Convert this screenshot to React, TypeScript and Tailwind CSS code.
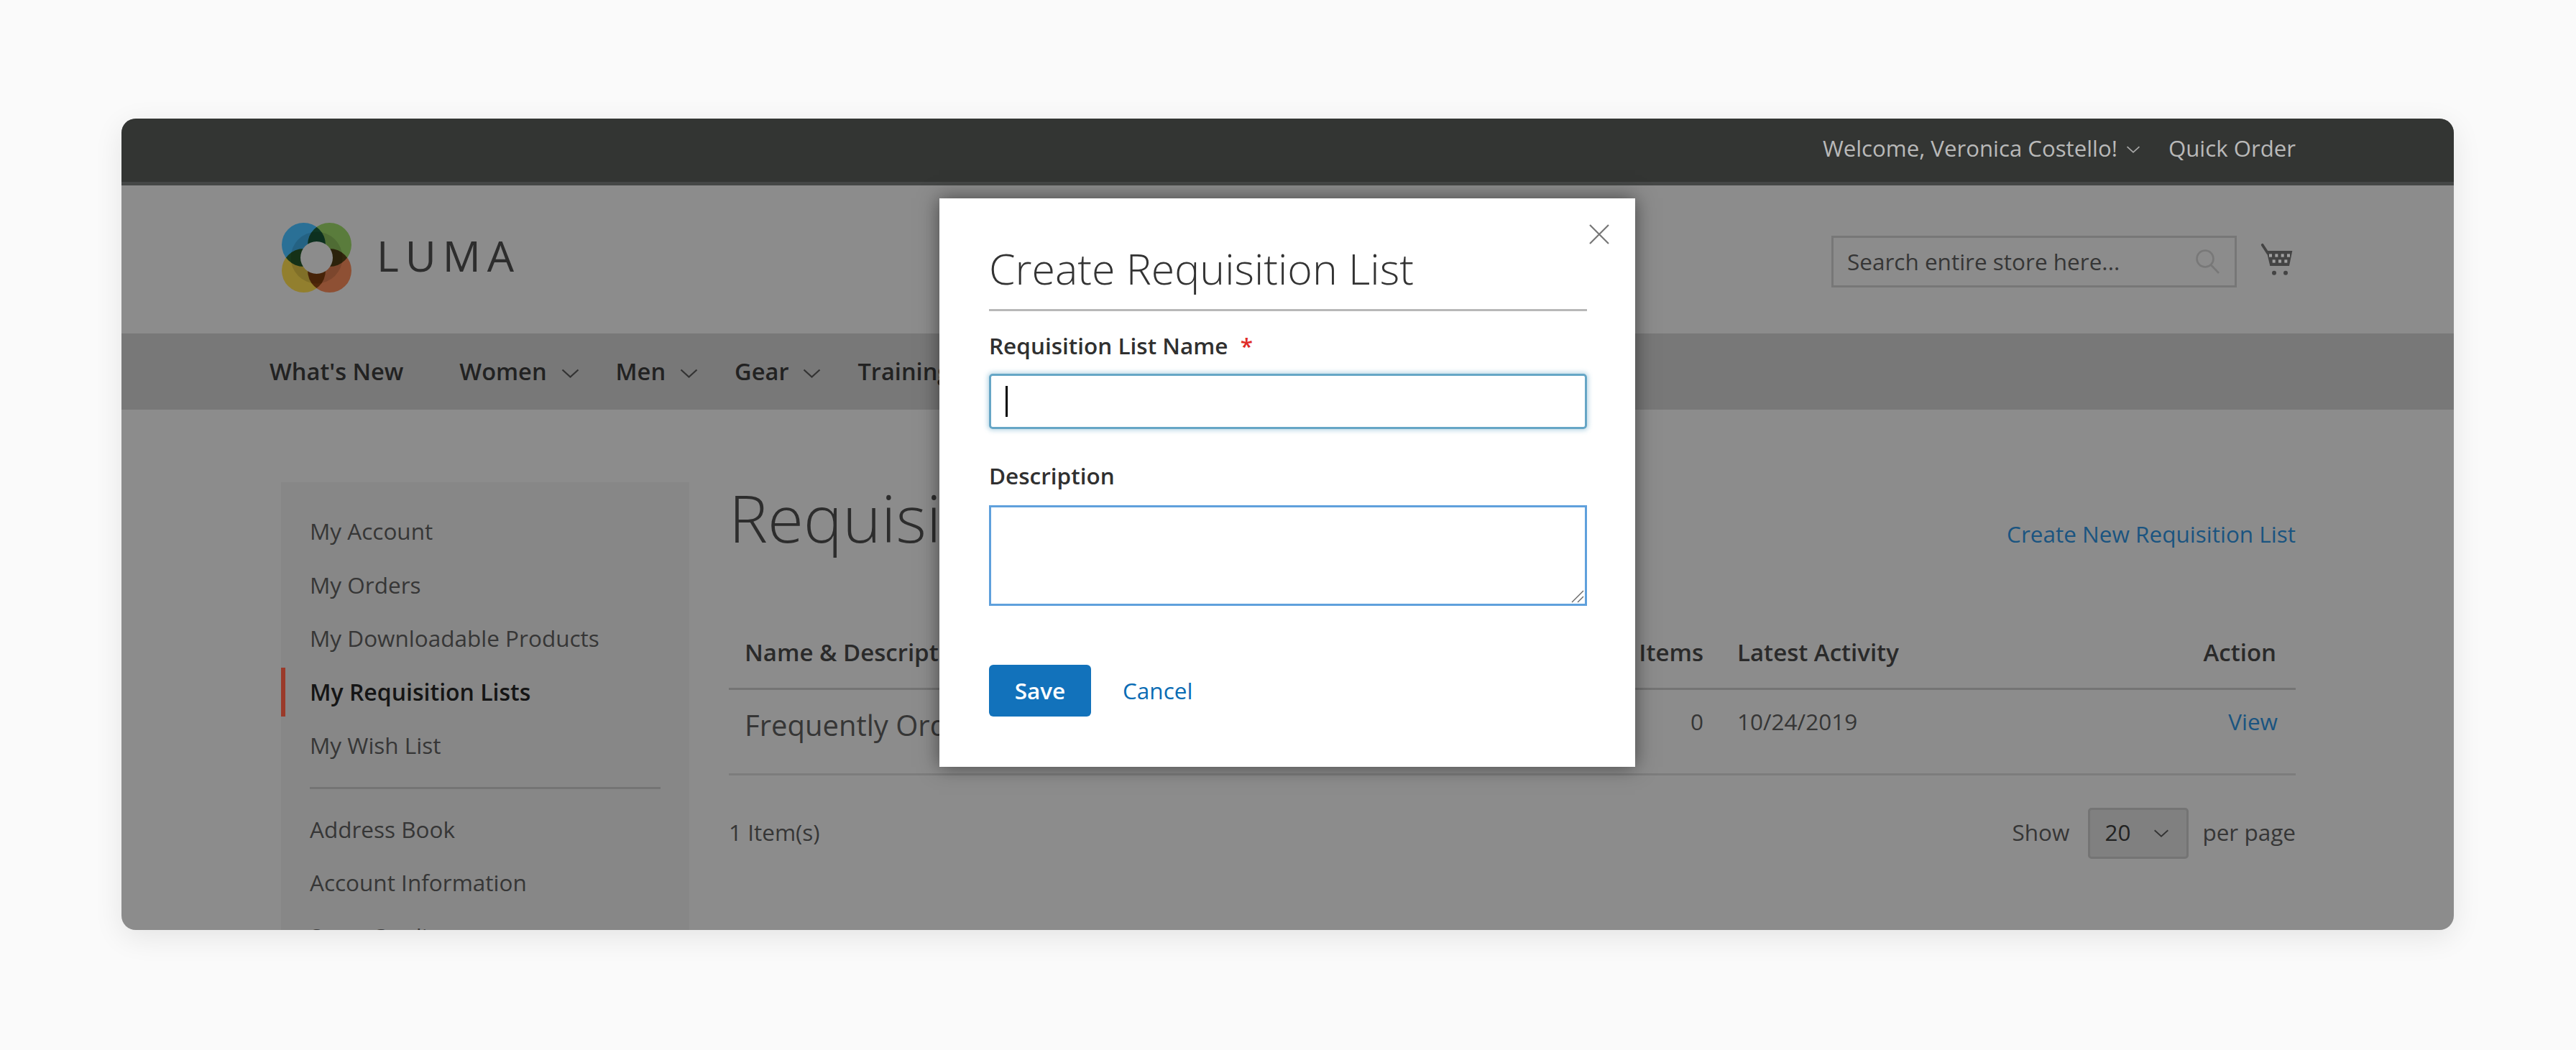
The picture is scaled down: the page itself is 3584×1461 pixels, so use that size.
import React from "react";

const Chevron = ({ className = "" }: { className?: string }) => (
  <svg viewBox="0 0 25 13" className={className} fill="none" stroke="currentColor" strokeWidth="2.2">
    <path d="M1.5 1.5 L12.5 11.5 L23.5 1.5" />
  </svg>
);

const Logo = () => (
  <svg width="98" height="99" viewBox="0 0 98 99" className="isolate">
    <circle cx="30.5" cy="31.5" r="30.5" fill="#2a7096" className="mix-blend-multiply" />
    <circle cx="66.5" cy="31.5" r="30.5" fill="#5a7c3c" className="mix-blend-multiply" />
    <circle cx="30.5" cy="67.5" r="30.5" fill="#927f2e" className="mix-blend-multiply" />
    <circle cx="66.5" cy="67.5" r="30.5" fill="#8e5034" className="mix-blend-multiply" />
    <circle cx="48.5" cy="49.5" r="36" fill="#000000" fillOpacity="0.12" />
    <circle cx="48.5" cy="49.5" r="22.5" fill="#8c8c8c" />
  </svg>
);

const Cart = () => (
  <svg width="45" height="46" viewBox="0 0 135 138">
    <path d="M8 8 L30 42" stroke="#444" strokeWidth="11" strokeLinecap="round" />
    <path d="M25 33 H133 L120 96 H40 Z" fill="#444" />
    <g fill="#a0a0a0">
      <rect x="36" y="46" width="12" height="13" />
      <rect x="61" y="46" width="12" height="13" />
      <rect x="86" y="46" width="12" height="13" />
      <rect x="111" y="46" width="12" height="13" />
      <rect x="50" y="70" width="12" height="13" />
      <rect x="75" y="70" width="12" height="13" />
      <rect x="100" y="70" width="12" height="13" />
    </g>
    <circle cx="57" cy="125" r="9" fill="#444" />
    <circle cx="105" cy="125" r="9" fill="#444" />
  </svg>
);

const Search = () => (
  <svg width="34" height="34" viewBox="0 0 34 34" fill="none" stroke="#787878" strokeWidth="2.6">
    <circle cx="13" cy="13" r="11.5" />
    <path d="M21.5 22 L32 33" />
  </svg>
);

const group1 = ["My Account", "My Orders", "My Downloadable Products"];
const group2 = ["Address Book", "Account Information", "Store Credit"];
const nav = ["Women", "Men", "Gear"];

export default function App() {
  return (
    <div className="h-[1461px] w-[3584px] overflow-hidden bg-[#fafafa] pl-[169px] pt-[165px] font-['Open_Sans',sans-serif] text-[31.5px] leading-[40px]">
      <div className="relative h-[1129px] w-[3245px] overflow-hidden rounded-[20px] bg-[#8c8c8c] shadow-[0_10px_40px_rgba(0,0,0,0.09)]">
        <div className="flex h-[93px] items-center justify-end border-b-[5px] border-[#454746] bg-[#333533] pb-[6px] pr-[220px] text-[31.2px] text-[#b9b9b9]">
          <span>Welcome, Veronica Costello!</span>
          <Chevron className="ml-[11px] mt-[4px] h-[10px] w-[22px] text-[#a8a8a8]" />
          <span className="ml-[38px]">Quick Order</span>
        </div>

        <div className="flex h-[206px] items-center justify-between pl-[223px] pr-[224px]">
          <div className="mb-[6px] flex items-center">
            <Logo />
            <span className="mb-[6px] ml-[34px] text-[59px] font-medium leading-[70px] tracking-[9px] text-[#2d2d2d]">LUMA</span>
          </div>
          <div className="flex items-center">
            <div className="mt-[5px] flex h-[72px] w-[564px] items-center justify-between border-[3px] border-[#777777] pl-[19px] pr-[20px] text-[#363636]">
              <span>Search entire store here...</span>
              <Search />
            </div>
            <div className="ml-[33px]">
              <Cart />
            </div>
          </div>
        </div>

        <div className="flex h-[106px] items-center bg-[#787878] pl-[206px] text-[32.6px] font-semibold text-[#222222]">
          <span className="mr-[78px]">What's New</span>
          {nav.map((n) => (
            <span key={n} className="mr-[51px] flex items-center">
              {n}
              <Chevron className="ml-[20px] mt-[4px] h-[13px] w-[25px] text-[#333333]" />
            </span>
          ))}
          <span>Training</span>
        </div>

        <div className="flex pl-[222px]">
          <div className="mt-[101px] h-[700px] w-[568px] shrink-0 bg-[#878787] pt-[31px] text-[#363636]">
            {group1.map((t) => (
              <div key={t} className="flex h-[74.5px] items-center pl-[40px]">{t}</div>
            ))}
            <div className="flex h-[74.5px] items-center">
              <div className="flex h-[68px] items-center border-l-[6px] border-[#9a3a2a] pl-[34px] text-[32px] font-semibold leading-[40px] text-[#151515]">
                My Requisition Lists
              </div>
            </div>
            <div className="flex h-[74.5px] items-center pl-[40px]">My Wish List</div>
            <div className="ml-[40px] mt-[20px] h-[3px] w-[488px] bg-[#747474]" />
            <div className="mt-[19px]">
              {group2.map((t) => (
                <div key={t} className="flex h-[74.5px] items-center pl-[40px]">{t}</div>
              ))}
            </div>
          </div>

          <div className="ml-[55px] mt-[100px] w-[2180px]">
            <div className="flex items-baseline justify-between">
              <h1 className="text-[91px] font-light leading-[100px] text-[#2d2d2d]">Requisition Lists</h1>
              <a className="text-[#1a5480]">Create New Requisition List</a>
            </div>

            <div className="mt-[118px] grid grid-cols-[1186px_170px_1fr_300px] border-b-[3px] border-[#747474] pb-[29px] text-[33px] font-semibold text-[#2a2a2a]">
              <div className="pl-[22px]">Name &amp; Description</div>
              <div className="text-right">Items</div>
              <div className="pl-[47px]">Latest Activity</div>
              <div className="pr-[27px] text-right">Action</div>
            </div>

            <div className="grid h-[119px] grid-cols-[1186px_170px_1fr_300px] border-b-[3px] border-[#7c7c7c] pt-[24px] text-[#363636]">
              <div className="pl-[22px] text-[40px] leading-[50px]">Frequently Ordered</div>
              <div className="text-right">0</div>
              <div className="pl-[47px]">10/24/2019</div>
              <div className="pr-[25px] text-right text-[#1a5480]">View</div>
            </div>

            <div className="mt-[45px] flex items-center justify-between text-[#363636]">
              <span className="pb-[4px]">1 Item(s)</span>
              <div className="flex items-center">
                <span className="pb-[4px]">Show</span>
                <div className="ml-[26px] flex h-[71px] w-[140px] items-center justify-between rounded-[5px] border-[3px] border-[#747474] bg-[#808080] pb-[4px] pl-[20px] pr-[24px] text-[#222222]">
                  <span>20</span>
                  <Chevron className="mt-[4px] h-[11px] w-[22px] text-[#333333]" />
                </div>
                <span className="ml-[19px] pb-[4px]">per page</span>
              </div>
            </div>
          </div>
        </div>

        <div className="absolute left-[1138px] top-[111px] h-[791px] w-[968px] bg-white pl-[69px] pr-[67px] pt-[62px] shadow-[0_0_26px_rgba(0,0,0,0.5)]">
          <svg className="absolute right-[36px] top-[36px]" width="28" height="28" viewBox="0 0 28 28" fill="none" stroke="#777777" strokeWidth="2.2">
            <path d="M1 1 L27 27 M27 1 L1 27" />
          </svg>
          <div className="border-b-[3px] border-[#b8b8b8] pb-[22px] text-[59px] font-light leading-[70px] text-[#333333]">
            Create Requisition List
          </div>
          <div className="mt-[28px] font-semibold text-[#303030]">
            Requisition List Name <span className="ml-[9px] text-[#e02b27]">*</span>
          </div>
          <div className="mt-[19px] flex h-[77px] items-center rounded-[5px] border-[3px] border-[#66a6c6] pl-[20px] shadow-[0_0_6px_2px_rgba(104,168,200,0.45)]">
            <div className="h-[43px] w-[3px] bg-black" />
          </div>
          <div className="mt-[45px] font-semibold text-[#303030]">Description</div>
          <div className="relative mt-[21px] h-[140px] border-[3px] border-[#5fa0dc]">
            <svg className="absolute bottom-[1px] right-[1px]" width="18" height="18" viewBox="0 0 18 18" fill="none" stroke="#666666" strokeWidth="1.4">
              <path d="M1 17 L17 1 M9 17 L17 9" />
            </svg>
          </div>
          <div className="mt-[82px] flex items-center">
            <button className="h-[72px] w-[142px] rounded-[6px] bg-[#1272bb] font-semibold text-white">Save</button>
            <a className="ml-[44px] text-[#0a6cb4]">Cancel</a>
          </div>
        </div>
      </div>
    </div>
  );
}
